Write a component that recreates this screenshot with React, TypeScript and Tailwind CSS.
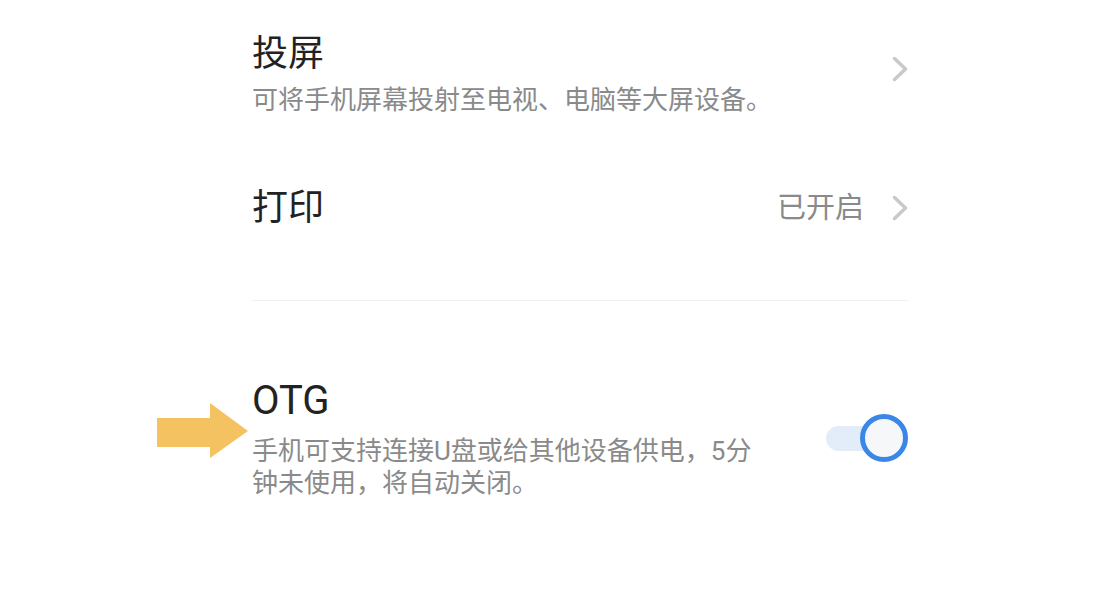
import React from 'react'

const font = { fontFamily: 'Roboto, "Noto Sans CJK SC", sans-serif' }

function Chevron() {
  return (
    <svg width="16" height="26" viewBox="0 0 16 26" fill="none" className="shrink-0">
      <polyline points="2.5,2.5 13.5,13 2.5,23.5" stroke="#c9c9c9" strokeWidth="3.5" strokeLinecap="round" strokeLinejoin="round" />
    </svg>
  )
}

function Toggle() {
  return (
    <div className="relative w-[84px] h-[48px] shrink-0">
      <div className="absolute left-[2px] top-[12px] w-[62px] h-[25px] rounded-full bg-[#e3edfa]" />
      <div className="absolute right-0 top-0 w-[48px] h-[48px] rounded-full border-[5px] border-[#3a87e8] bg-[#f6f7f9]" />
    </div>
  )
}

function Arrow() {
  return (
    <svg className="absolute left-[157px] top-[403px]" width="92" height="56" viewBox="0 0 92 56">
      <polygon points="0,15 53,15 53,0 91,28 53,55 53,44 0,44" fill="#f5c262" />
    </svg>
  )
}

export default function App() {
  return (
    <div className="relative w-[1096px] h-[616px] bg-white overflow-hidden" style={font}>
      <Arrow />
      <div className="ml-[252px] w-[656px] pt-[32px]">
        {/* 投屏 */}
        <div className="flex items-center justify-between">
          <div>
            <div className="text-[36px] leading-[44px] text-[#222222]">投屏</div>
            <div className="mt-[8px] text-[26px] leading-[32px] text-[#8a8a8a]">可将手机屏幕投射至电视、电脑等大屏设备。</div>
          </div>
          <div className="-mt-[10px]">
            <Chevron />
          </div>
        </div>

        {/* 打印 */}
        <div className="mt-[70px] flex items-center justify-between h-[44px]">
          <div className="text-[36px] leading-[44px] text-[#222222]">打印</div>
          <div className="flex items-center gap-[28px]">
            <span className="text-[29px] leading-[44px] text-[#8a8a8a]">已开启</span>
            <Chevron />
          </div>
        </div>

        <div className="mt-[70px] h-px bg-[#f1f1f1]" />

        {/* OTG */}
        <div className="mt-[76px] flex items-center justify-between">
          <div>
            <div className="text-[40px] leading-[48px] text-[#222222]">OTG</div>
            <div className="mt-[10px] w-[505px] text-[26px] leading-[32px] text-[#8a8a8a]">
              手机可支持连接U盘或给其他设备供电，5分钟未使用，将自动关闭。
            </div>
          </div>
          <Toggle />
        </div>
      </div>
    </div>
  )
}
